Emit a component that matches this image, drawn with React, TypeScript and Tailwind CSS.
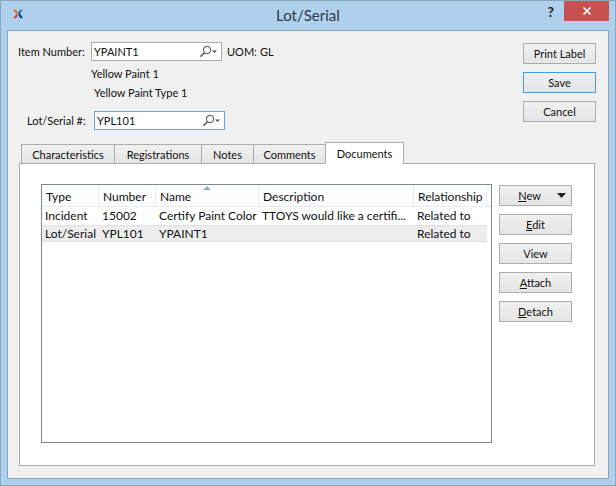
import { ReactNode } from 'react';

function Button({ children, focused, className = '' }: { children: ReactNode; focused?: boolean; className?: string }) {
  return (
    <button
      className={`flex h-[21px] w-[73px] items-center justify-center border bg-gradient-to-b from-[#f0f0f0] to-[#e5e5e5] text-[#111] ${
        focused ? 'border-[#3d9bf0]' : 'border-[#adadad]'
      } ${className}`}
    >
      {children}
    </button>
  );
}

function LookupIcon() {
  return (
    <svg width="19" height="13" viewBox="0 0 19 13" className="shrink-0">
      <circle cx="8" cy="5" r="3.6" fill="none" stroke="#6b6b6b" strokeWidth="1.2" />
      <path d="M5.4 7.8 L1.5 11.6" stroke="#555" strokeWidth="1.6" />
      <path d="M13 5.5 h5 l-2.5 2.5z" fill="#555" />
    </svg>
  );
}

function Lookup({ value, focused, className = '' }: { value: string; focused?: boolean; className?: string }) {
  return (
    <div
      className={`flex h-[19px] w-[131px] items-center justify-between bg-white pl-[2px] pr-[3px] border ${
        focused ? 'border-[#68a8e0]' : 'border-[#acacac]'
      } ${className}`}
    >
      <span>{value}</span>
      <LookupIcon />
    </div>
  );
}

function Tab({ label, width, active }: { label: string; width: string; active?: boolean }) {
  if (active) {
    return (
      <div className={`relative z-10 flex h-[22px] items-center justify-center border border-b-0 border-[#acacac] bg-white ${width}`}>
        {label}
      </div>
    );
  }
  return (
    <div className={`mt-[2px] flex h-[19px] items-center justify-center border border-b-0 border-r-0 border-[#acacac] bg-gradient-to-b from-[#f0f0f0] to-[#e5e5e5] ${width}`}>
      {label}
    </div>
  );
}

const columns = [
  { label: 'Type', width: 'w-[57px]' },
  { label: 'Number', width: 'w-[57px]' },
  { label: 'Name', width: 'w-[103px]' },
  { label: 'Description', width: 'w-[155px]' },
  { label: 'Relationship', width: 'w-[73px]' },
];

const rows = [
  ['Incident', '15002', 'Certify Paint Color', 'TTOYS would like a certifi...', 'Related to'],
  ['Lot/Serial', 'YPL101', 'YPAINT1', '', 'Related to'],
];

export default function App() {
  return (
    <div className="flex h-[486px] w-[616px] flex-col border border-[#8aa5be] bg-[#aed0ec] font-['Lato','Noto_Sans',sans-serif] text-[11px] leading-none text-[#111]">
      {/* Title bar */}
      <div className="flex h-[29px] shrink-0 items-start">
        <svg width="12" height="10" viewBox="0 0 16 14" className="ml-[11px] mt-[8px] shrink-0">
          <path d="M1 1 H5 L8 5 L6 7 Z" fill="#e8622a" />
          <path d="M6 7 L8 9 L5 13 H1 Z" fill="#d93a2b" />
          <path d="M15 1 H11 L8 5 L10 7 Z" fill="#1f7fc9" />
          <path d="M8 7 L10 5 L15 13 H11 Z" fill="#14427f" />
        </svg>
        <div className="flex-1 whitespace-nowrap pl-[252px] pt-[7px] text-[15px] text-[#2b3a4a]">Lot/Serial</div>
        <span className="mr-[10px] mt-[4px] text-[14px] font-bold text-[#222]">?</span>
        <div className="mr-[6px] flex h-[20px] w-[45px] items-center justify-center bg-[#c75050]">
          <svg width="10" height="10" viewBox="0 0 10 10">
            <path d="M1.5 1.5 L8.5 8.5 M8.5 1.5 L1.5 8.5" stroke="white" strokeWidth="1.6" />
          </svg>
        </div>
      </div>

      {/* Dialog body */}
      <div className="mb-[6px] ml-[6px] mr-[6px] flex-1 border border-[#8aa5be] bg-[#f0f0f0] pl-[10px] pr-[11px] pt-[11px]">
        <div className="flex h-[100px] justify-between">
          <div>
            <div className="flex h-[19px] items-center">
              <span className="w-[73px] whitespace-nowrap">Item Number:</span>
              <Lookup value="YPAINT1" />
              <span className="ml-[5px] w-[34px]">UOM:</span>
              <span className="-ml-[1px]">GL</span>
            </div>
            <div className="ml-[73px] mt-[7px] h-[12px] leading-[12px]">Yellow Paint 1</div>
            <div className="ml-[76px] mt-[7px] h-[12px] leading-[12px]">Yellow Paint Type 1</div>
            <div className="mt-[12px] flex h-[19px] items-center">
              <span className="ml-[9px] w-[67px] whitespace-nowrap">Lot/Serial #:</span>
              <Lookup value="YPL101" focused />
            </div>
          </div>
          <div className="mr-[1px] flex flex-col gap-[8px] pt-[1px]">
            <Button>Print Label</Button>
            <Button focused>Save</Button>
            <Button>Cancel</Button>
          </div>
        </div>

        {/* Tabs */}
        <div className="relative ml-[3px] flex h-[21px] items-start">
          <Tab label="Characteristics" width="w-[93px]" />
          <Tab label="Registrations" width="w-[87px]" />
          <Tab label="Notes" width="w-[52px]" />
          <Tab label="Comments" width="w-[72px]" />
          <Tab label="Documents" width="w-[79px]" active />
        </div>
        <div className="ml-[1px] flex h-[303px] w-[576px] gap-[7px] border border-[#acacac] bg-white pl-[21px] pt-[20px]">
          {/* Table */}
          <div className="h-[259px] w-[451px] border border-[#828790] bg-white text-[12px]">
            <div className="relative flex h-[22px] items-center border-b border-[#e5eef7] bg-gradient-to-b from-[#fff] to-[#fafcfe]">
              {columns.map((c) => (
                <div key={c.label} className={`flex h-full items-center border-r border-[#e3ecf6] pl-[4px] pt-[2px] ${c.width}`}>
                  {c.label}
                </div>
              ))}
              <svg width="8" height="4" viewBox="0 0 8 4" className="absolute left-[161px] top-[1px]">
                <path d="M0 4 L4 0 L8 4 Z" fill="#8fb0c4" />
              </svg>
            </div>
            {rows.map((row, i) => (
              <div
                key={row[0]}
                className={`flex ${i === 0 ? 'h-[18px]' : 'h-[17px] w-[445px] border-y border-[#e0e0e0] bg-[#ededed]'} items-center`}
              >
                {row.map((cell, j) => (
                  <div key={j} className={`whitespace-nowrap pl-[3px] ${columns[j].width}`}>
                    {cell}
                  </div>
                ))}
              </div>
            ))}
          </div>

          {/* Side buttons */}
          <div className="flex flex-col gap-[8px] pt-[1px]">
            <Button className="relative">
              <span className="mr-[12px]">
                <u>N</u>ew
              </span>
              <svg width="9" height="5" viewBox="0 0 9 5" className="absolute right-[5px] top-[7px]">
                <path d="M0 0 H9 L4.5 5 Z" fill="#222" />
              </svg>
            </Button>
            <Button>
              <span>
                <u>E</u>dit
              </span>
            </Button>
            <Button>View</Button>
            <Button>
              <span>
                <u>A</u>ttach
              </span>
            </Button>
            <Button>
              <span>
                <u>D</u>etach
              </span>
            </Button>
          </div>
        </div>
      </div>
    </div>
  );
}
